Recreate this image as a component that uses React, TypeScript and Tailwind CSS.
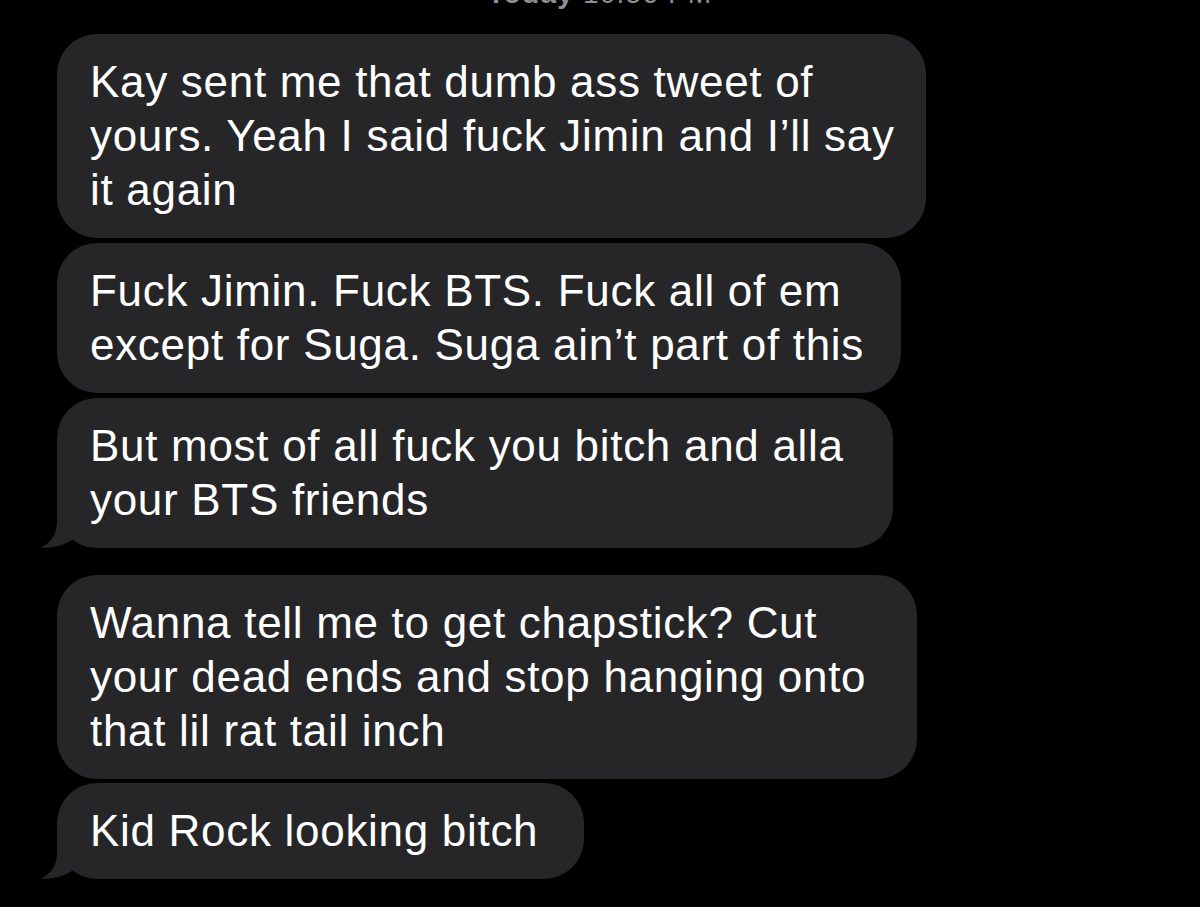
import React from 'react';

const messages = [
  { lines: ['Kay sent me that dumb ass tweet of', 'yours. Yeah I said fuck Jimin and I\u2019ll say', 'it again'], tail: false, gap: 'mt-[23px]', w: 'w-[869px]' },
  { lines: ['Fuck Jimin. Fuck BTS. Fuck all of em', 'except for Suga. Suga ain\u2019t part of this'], tail: false, gap: 'mt-[5px]', w: 'w-[844px]' },
  { lines: ['But most of all fuck you bitch and alla', 'your BTS friends'], tail: true, gap: 'mt-[5px]', w: 'w-[836px]' },
  { lines: ['Wanna tell me to get chapstick? Cut', 'your dead ends and stop hanging onto', 'that lil rat tail inch'], tail: false, gap: 'mt-[27px]', w: 'w-[860px]' },
  { lines: ['Kid Rock looking bitch'], tail: true, gap: 'mt-[4px]', w: 'w-[527px]' },
];

function Tail() {
  return (
    <svg
      className="absolute left-[-17px] bottom-0"
      width="36"
      height="36"
      viewBox="0 0 36 36"
    >
      <path d="M17 0 L17 9 C17 22 12 30 1 35.5 C14 36.5 25 33 33 27 L33 0 Z" fill="#262628" />
    </svg>
  );
}

function Bubble({ lines, tail, w }: { lines: string[]; tail: boolean; w: string }) {
  return (
    <div className={`relative ${w}`}>
      {tail && <Tail />}
      <div className="relative rounded-[40px] bg-[#262628] pl-[33px] pr-[30px] pt-[21px] pb-[21px] text-white text-[44px] leading-[54px] tracking-[0.7px] whitespace-nowrap">
        {lines.map((l, i) => (
          <div key={i}>{l}</div>
        ))}
      </div>
    </div>
  );
}

export default function App() {
  return (
    <div className="h-[907px] w-[1200px] overflow-hidden bg-black font-['Liberation_Sans',Arial,sans-serif]">
      <div className="-mt-[23px] h-[34px] text-center text-[28px] leading-[34px] tracking-[1.2px] text-[#8e8e93]">
        <span className="font-bold">Today</span> 10:56 PM
      </div>
      <div className="pl-[57px]">
        {messages.map((m, i) => (
          <div key={i} className={m.gap}>
            <Bubble lines={m.lines} tail={m.tail} w={m.w} />
          </div>
        ))}
      </div>
    </div>
  );
}
